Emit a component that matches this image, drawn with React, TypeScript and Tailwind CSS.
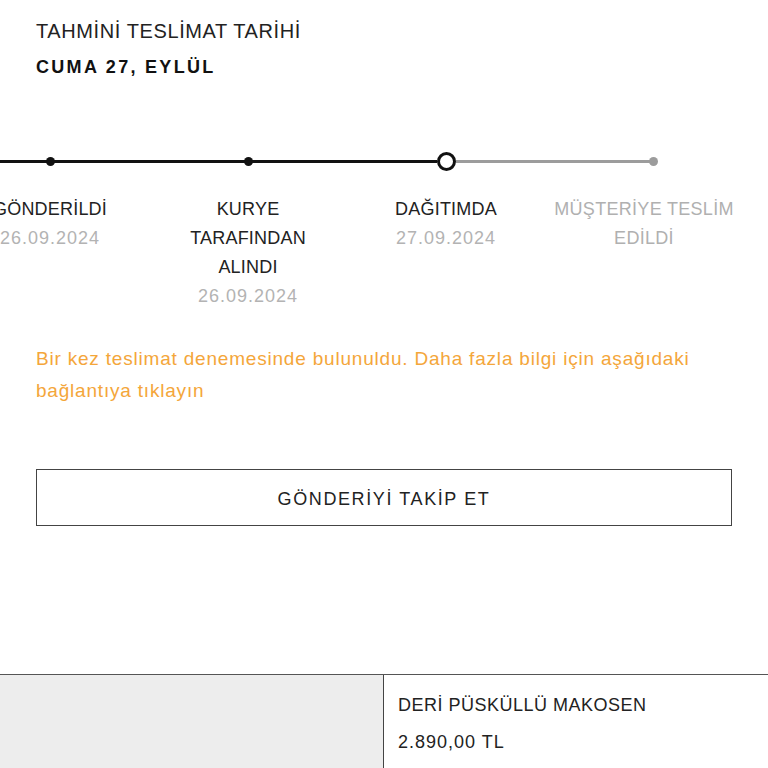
import { Fragment } from 'react'

type Step = {
  lines: string[]
  date?: string
  state: 'done' | 'current' | 'todo'
}

const STEPS: Step[] = [
  { lines: ['GÖNDERİLDİ'], date: '26.09.2024', state: 'done' },
  { lines: ['KURYE', 'TARAFINDAN', 'ALINDI'], date: '26.09.2024', state: 'done' },
  { lines: ['DAĞITIMDA'], date: '27.09.2024', state: 'current' },
  { lines: ['MÜŞTERİYE TESLİM', 'EDİLDİ'], state: 'todo' },
]

const font = { fontFamily: '"Liberation Sans", Arial, sans-serif' }

export default function App() {
  return (
    <div className="min-h-screen overflow-hidden bg-white text-[#1c1c1c]" style={font}>
      <div className="px-9 pt-[13px]">
        <p className="text-[20px] leading-[36px] tracking-[0.6px] text-[#222]">TAHMİNİ TESLİMAT TARİHİ</p>
        <p className="text-[18px] font-bold leading-[36px] tracking-[2.3px] text-[#111]">CUMA 27, EYLÜL</p>
      </div>

      <Timeline />

      <p className="mt-[32px] px-9 text-[19px] leading-[32px] tracking-[0.8px] text-[#f4a63a]">
        Bir kez teslimat denemesinde bulunuldu. Daha fazla bilgi için aşağıdaki bağlantıya tıklayın
      </p>

      <div className="mt-[62px] px-9">
        <button className="flex h-[57px] w-full items-center justify-center border border-[#444] pt-[3px] text-[18px] tracking-[1.6px] text-[#222]">
          GÖNDERİYİ TAKİP ET
        </button>
      </div>

      <div className="mt-[148px] flex h-[220px] border-t border-[#555]">
        <div className="w-[384px] shrink-0 border-r border-[#444] bg-[#ededed]" />
        <div className="pl-[14px] pt-[16px]">
          <p className="text-[18px] leading-[28px] tracking-[0.5px] text-[#222]">DERİ PÜSKÜLLÜ MAKOSEN</p>
          <p className="mt-[9px] text-[18px] leading-[28px] tracking-[1px] text-[#222]">2.890,00 TL</p>
        </div>
      </div>
    </div>
  )
}

function Timeline() {
  return (
    <div className="mt-[66px] overflow-hidden">
      <div className="-ml-[49px] flex">
        {STEPS.map((s, i) => (
          <StepColumn key={i} step={s} first={i === 0} last={i === STEPS.length - 1} />
        ))}
      </div>
    </div>
  )
}

function StepColumn({ step, first, last }: { step: Step; first: boolean; last: boolean }) {
  const leftColor = step.state === 'todo' ? 'bg-[#9c9c9c]' : 'bg-[#111]'
  const rightColor = step.state === 'done' ? 'bg-[#111]' : 'bg-[#9c9c9c]'
  const muted = step.state === 'todo'

  return (
    <div className="flex w-[198px] shrink-0 flex-col items-center">
      <div className="flex h-5 w-full items-center">
        <div className={`h-[3px] flex-1 ${first ? 'bg-[#111]' : leftColor}`} />
        {step.state === 'current' ? (
          <div className="size-[19px] shrink-0 rounded-full border-[3px] border-[#111] bg-white" />
        ) : step.state === 'done' ? (
          <div className="-mx-px size-[9px] shrink-0 rounded-full bg-[#111]" />
        ) : (
          <div className="-mx-px size-[9px] shrink-0 rounded-full bg-[#9c9c9c]" />
        )}
        {last ? <div className="w-[86px]" /> : <div className={`h-[3px] flex-1 ${rightColor}`} />}
      </div>
      <div className="mt-[24px] text-center text-[18px] leading-[29px]">
        {step.lines.map((l, j) => (
          <Fragment key={j}>
            <p className={muted ? 'tracking-[0.3px] text-[#b0b0b0]' : 'tracking-[0.2px] text-[#222]'}>{l}</p>
          </Fragment>
        ))}
        {step.date && <p className="tracking-[1px] text-[#b3b3b3]">{step.date}</p>}
      </div>
    </div>
  )
}
